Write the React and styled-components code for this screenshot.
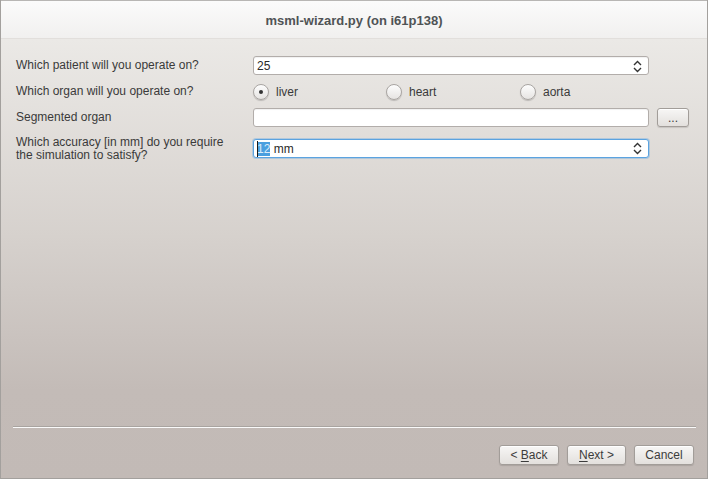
import React from "react";
import styled, { createGlobalStyle } from "styled-components";

const GlobalStyle = createGlobalStyle`
  html, body {
    margin: 0;
    padding: 0;
    background: #c3bbb7;
  }
  * {
    box-sizing: border-box;
  }
`;

const Window = styled.div`
  width: 708px;
  height: 479px;
  display: flex;
  flex-direction: column;
  border: 1px solid #a3a09d;
  border-top: none;
  font-family: "Liberation Sans", "DejaVu Sans", sans-serif;
  font-size: 12px;
  color: #3c3c3c;
  overflow: hidden;
`;

const TitleBar = styled.div`
  height: 39px;
  flex: none;
  display: flex;
  align-items: center;
  justify-content: center;
  background: linear-gradient(to bottom, #fbfbfb, #f1f0ef);
  border-top: 1px solid #b8b6b4;
  border-bottom: 1px solid #e2dfdc;
  font-size: 13px;
  font-weight: bold;
  color: #4f5355;
  padding-top: 2px;
`;

const Body = styled.div`
  flex: 1;
  display: flex;
  flex-direction: column;
  background: linear-gradient(to bottom, #ebe9e6 0%, #d6d1cd 45%, #c3bbb7 80%, #c2bab6 100%);
  padding: 17px 11px 13px 11px;
`;

const Form = styled.div`
  display: grid;
  grid-template-columns: 229px 396px 32px;
  column-gap: 8px;
  row-gap: 7px;
  align-items: center;
  padding-left: 4px;
`;

const Label = styled.div`
  line-height: 13px;
  padding-top: ${(p) => (p.$multi ? "2px" : "0")};
  color: #3a3a3a;
`;

const Field = styled.div`
  height: 19px;
  display: flex;
  align-items: center;
  background: #ffffff;
  border: 1px solid ${(p) => (p.$focused ? "#5ba3e0" : "#b2adaa")};
  box-shadow: ${(p) =>
    p.$focused ? "0 0 0 1px rgba(120, 175, 225, 0.45)" : "inset 0 1px 1px rgba(0,0,0,0.06)"};
  border-radius: 3px;
  padding: 1px 6px 0 3px;
`;

const FieldText = styled.span`
  flex: 1;
  color: #2a2a2a;
  white-space: pre;
`;

const Selected = styled.span`
  background: #4a9fdf;
  color: #dcecf9;
  position: relative;
  &::before {
    content: "";
    position: absolute;
    left: 0;
    top: -1px;
    bottom: -1px;
    width: 1px;
    background: #1a1a1a;
  }
`;

const RadioGroup = styled.div`
  display: grid;
  grid-template-columns: 133px 134px 129px;
  align-items: center;
  height: 19px;
`;

const RadioOption = styled.label`
  display: flex;
  align-items: center;
  gap: 7px;
  color: #3a3a3a;
`;

const RadioCircle = styled.span`
  width: 16px;
  height: 16px;
  border-radius: 50%;
  border: 1px solid #a9a5a2;
  background: linear-gradient(to bottom, #fdfdfd, #e6e4e2);
  box-shadow: 0 1px 1px rgba(0, 0, 0, 0.18);
  display: flex;
  align-items: center;
  justify-content: center;
  &::after {
    content: "";
    width: 4px;
    height: 4px;
    border-radius: 50%;
    background: ${(p) => (p.$checked ? "#333" : "transparent")};
  }
`;

const Button = styled.button`
  height: ${(p) => (p.$small ? "19px" : "20px")};
  width: ${(p) => p.$w || "60px"};
  padding: 0;
  font-family: inherit;
  font-size: 12px;
  line-height: 18px;
  text-align: center;
  white-space: pre;
  color: #3c3c3c;
  background: linear-gradient(to bottom, #f7f6f5, #e3e0dd);
  border: 1px solid #a29d99;
  border-radius: 3px;
  box-shadow: 0 1px 1px rgba(0, 0, 0, 0.12), inset 0 1px 0 #ffffff;
  u {
    text-decoration: underline;
    text-underline-offset: 2px;
  }
`;

const Spacer = styled.div`
  flex: 1;
`;

const Separator = styled.div`
  height: 2px;
  margin: 0 0 17px 1px;
  border-top: 1px solid #a9a4a0;
  border-bottom: 1px solid #fafafa;
`;

const ButtonRow = styled.div`
  display: flex;
  justify-content: flex-end;
  gap: 8px;
  padding-right: 2px;
`;

const SpinArrows = () => (
  <svg width="9" height="13" viewBox="0 0 9 13">
    <path d="M1 5 L4.5 1.5 L8 5" fill="none" stroke="#333" strokeWidth="1.4" />
    <path d="M1 8 L4.5 11.5 L8 8" fill="none" stroke="#333" strokeWidth="1.4" />
  </svg>
);

const organs = ["liver", "heart", "aorta"];

const App = () => {
  return (
    <>
      <GlobalStyle />
      <Window>
        <TitleBar>msml-wizard.py (on i61p138)</TitleBar>
        <Body>
          <Form>
            <Label>Which patient will you operate on?</Label>
            <Field>
              <FieldText>25</FieldText>
              <SpinArrows />
            </Field>
            <span />

            <Label>Which organ will you operate on?</Label>
            <RadioGroup>
              {organs.map((o, i) => (
                <RadioOption key={o}>
                  <RadioCircle $checked={i === 0} />
                  {o}
                </RadioOption>
              ))}
            </RadioGroup>
            <span />

            <Label>Segmented organ</Label>
            <Field>
              <FieldText />
            </Field>
            <Button $small $w="32px">...</Button>

            <Label $multi>
              Which accuracy [in mm] do you require
              <br />
              the simulation to satisfy?
            </Label>
            <Field $focused>
              <FieldText>
                <Selected>12</Selected> mm
              </FieldText>
              <SpinArrows />
            </Field>
            <span />
          </Form>
          <Spacer />
          <Separator />
          <ButtonRow>
            <Button>
              {"< "}
              <u>B</u>ack
            </Button>
            <Button $w="59px">
              <u>N</u>ext &gt;
            </Button>
            <Button>Cancel</Button>
          </ButtonRow>
        </Body>
      </Window>
    </>
  );
};

export default App;
